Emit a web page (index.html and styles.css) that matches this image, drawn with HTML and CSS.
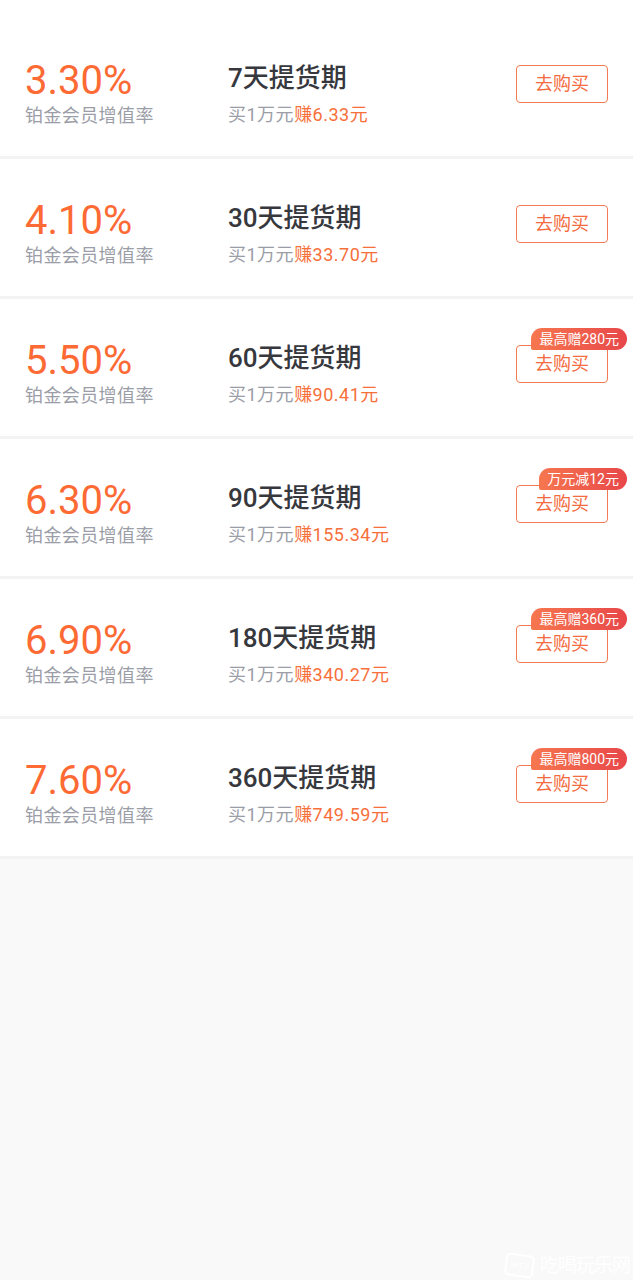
FILE: index.html
```html
<!DOCTYPE html>
<html lang="zh-CN">
<head>
    <meta charset="UTF-8">
    <meta name="viewport" content="width=device-width, initial-scale=1.0">
    <title>提货期</title>
    <link rel="stylesheet" href="styles.css">
</head>
<body>

    <!-- 产品列表 -->
    <div class="list">
        <div class="item">
            <div class="rate">
                <div class="rate-num">3.30%</div>
                <div class="rate-label">铂金会员增值率</div>
            </div>
            <div class="term">
                <div class="term-title">7天提货期</div>
                <div class="term-earn">买1万元<span>赚6.33元</span></div>
            </div>
            <div class="buy">
                <a href="#" class="buy-btn">去购买</a>
            </div>
        </div>

        <div class="item">
            <div class="rate">
                <div class="rate-num">4.10%</div>
                <div class="rate-label">铂金会员增值率</div>
            </div>
            <div class="term">
                <div class="term-title">30天提货期</div>
                <div class="term-earn">买1万元<span>赚33.70元</span></div>
            </div>
            <div class="buy">
                <a href="#" class="buy-btn">去购买</a>
            </div>
        </div>

        <div class="item">
            <div class="rate">
                <div class="rate-num">5.50%</div>
                <div class="rate-label">铂金会员增值率</div>
            </div>
            <div class="term">
                <div class="term-title">60天提货期</div>
                <div class="term-earn">买1万元<span>赚90.41元</span></div>
            </div>
            <div class="buy">
                <a href="#" class="buy-btn">去购买</a>
                <span class="tag">最高赠280元</span>
            </div>
        </div>

        <div class="item">
            <div class="rate">
                <div class="rate-num">6.30%</div>
                <div class="rate-label">铂金会员增值率</div>
            </div>
            <div class="term">
                <div class="term-title">90天提货期</div>
                <div class="term-earn">买1万元<span>赚155.34元</span></div>
            </div>
            <div class="buy">
                <a href="#" class="buy-btn">去购买</a>
                <span class="tag">万元减12元</span>
            </div>
        </div>

        <div class="item">
            <div class="rate">
                <div class="rate-num">6.90%</div>
                <div class="rate-label">铂金会员增值率</div>
            </div>
            <div class="term">
                <div class="term-title">180天提货期</div>
                <div class="term-earn">买1万元<span>赚340.27元</span></div>
            </div>
            <div class="buy">
                <a href="#" class="buy-btn">去购买</a>
                <span class="tag">最高赠360元</span>
            </div>
        </div>

        <div class="item">
            <div class="rate">
                <div class="rate-num">7.60%</div>
                <div class="rate-label">铂金会员增值率</div>
            </div>
            <div class="term">
                <div class="term-title">360天提货期</div>
                <div class="term-earn">买1万元<span>赚749.59元</span></div>
            </div>
            <div class="buy">
                <a href="#" class="buy-btn">去购买</a>
                <span class="tag">最高赠800元</span>
            </div>
        </div>
    </div>

    <!-- 水印 -->
    <div class="watermark">
        <span class="watermark-logo">SKCh</span>
        <span class="watermark-text">吃喝玩乐网</span>
    </div>

</body>
</html>
```

FILE: styles.css
```css
body, html {
    margin: 0;
    padding: 0;
    height: 100%;
    background-color: #f9f9f9;
    font-family: Roboto, "Noto Sans CJK SC", sans-serif;
}

.list {
    background-color: #fff;
    padding-top: 19px;
}

.item {
    display: flex;
    align-items: flex-start;
    box-sizing: border-box;
    height: 140px;
    padding: 42px 25px 0 25px;
    border-bottom: 3px solid #f3f3f3;
}

.rate {
    width: 203px;
}

.rate-num {
    font-size: 40px;
    line-height: 40px;
    color: #fd6a34;
}

.rate-label {
    margin-top: 3px;
    font-size: 18px;
    line-height: 24px;
    letter-spacing: 0.4px;
    color: #9b9da7;
}

.term {
    flex: 1;
}

.term-title {
    margin-top: 1px;
    font-size: 26px;
    line-height: 32px;
    font-weight: 500;
    color: #36383d;
}

.term-earn {
    margin-top: 9px;
    font-size: 18px;
    line-height: 24px;
    letter-spacing: 0.5px;
    color: #9b9da7;
}

.term-earn span {
    color: #f7703b;
}

.buy {
    position: relative;
    margin-top: 4px;
}

.buy-btn {
    display: block;
    box-sizing: border-box;
    width: 92px;
    height: 38px;
    line-height: 36px;
    border: 1px solid #f27a52;
    border-radius: 4px;
    text-align: center;
    font-size: 18px;
    color: #f46b3e;
    text-decoration: none;
}

.tag {
    position: absolute;
    right: -19px;
    top: -17px;
    height: 22px;
    line-height: 22px;
    padding: 0 8px;
    font-size: 14px;
    color: #fff;
    white-space: nowrap;
    background: linear-gradient(90deg, #f6774f, #e8474a);
    border-radius: 11px 11px 11px 2px;
}

.watermark {
    position: absolute;
    right: 3px;
    top: 1254px;
    display: flex;
    align-items: center;
    gap: 6px;
    color: #fff;
}

.watermark-logo {
    font-size: 8px;
    padding: 5px 3px;
    border: 2px solid #fff;
    border-radius: 5px;
    transform: rotate(8deg);
}

.watermark-text {
    font-size: 19px;
    line-height: 22px;
    letter-spacing: -1px;
}
```
